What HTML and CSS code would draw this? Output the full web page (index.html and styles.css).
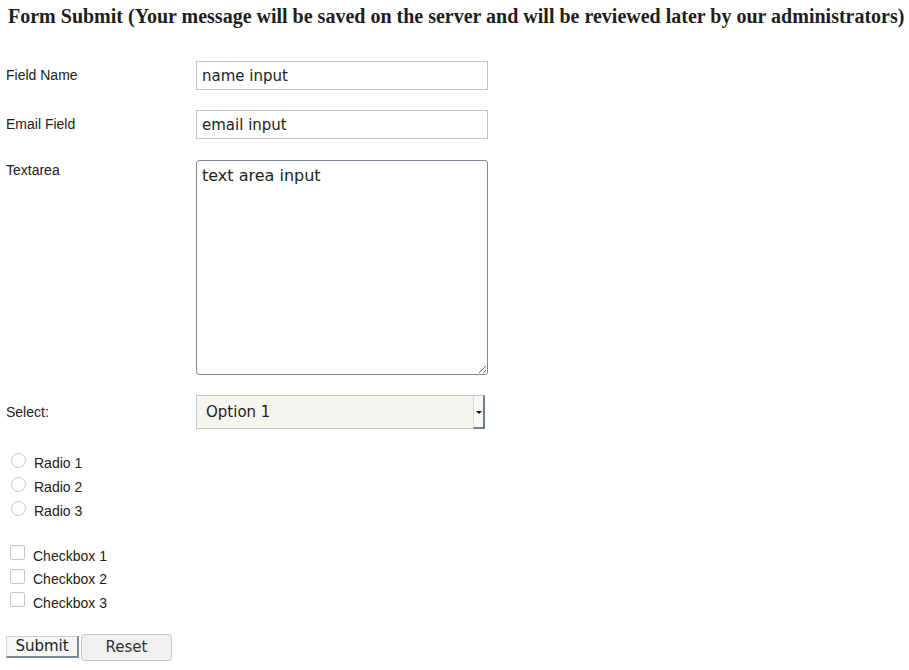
FILE: index.html
```html
<!DOCTYPE html>
<html>
<head>
<meta charset="utf-8">
<link rel="stylesheet" href="styles.css">
</head>
<body>
<h1 class="title">Form Submit (Your message will be saved on the server and will be reviewed later by our administrators)</h1>
<form class="form">
  <div class="row row-name">
    <label class="lbl lbl-input">Field Name</label>
    <input class="txt" type="text" value="name input">
  </div>
  <div class="row row-email">
    <label class="lbl lbl-input">Email Field</label>
    <input class="txt" type="text" value="email input">
  </div>
  <div class="row row-area">
    <label class="lbl lbl-area">Textarea</label>
    <textarea class="area">text area input</textarea>
  </div>
  <div class="row row-select">
    <label class="lbl lbl-select">Select:</label>
    <div class="select-wrap">
      <select class="sel"><option>Option 1</option><option>Option 2</option></select>
      <span class="sel-btn"><span class="sel-arrow"></span></span>
    </div>
  </div>
  <div class="group radios">
    <label class="choice"><input class="radio" type="radio" name="r"><span>Radio 1</span></label>
    <label class="choice"><input class="radio" type="radio" name="r"><span>Radio 2</span></label>
    <label class="choice"><input class="radio" type="radio" name="r"><span>Radio 3</span></label>
  </div>
  <div class="group checks">
    <label class="choice"><input class="check" type="checkbox"><span>Checkbox 1</span></label>
    <label class="choice"><input class="check" type="checkbox"><span>Checkbox 2</span></label>
    <label class="choice"><input class="check" type="checkbox"><span>Checkbox 3</span></label>
  </div>
  <div class="buttons">
    <button class="btn-submit" type="button">Submit</button>
    <button class="btn-reset" type="button">Reset</button>
  </div>
</form>
</body>
</html>
```
FILE: styles.css
```css
html, body {
  margin: 0;
  padding: 0;
  background: #ffffff;
}
body {
  color: #222222;
  font-family: "Liberation Sans", Arial, sans-serif;
  font-size: 14px;
}
.title {
  margin: 5px 0 0 8px;
  font-family: "Liberation Serif", "Times New Roman", serif;
  font-size: 20px;
  line-height: 23px;
  font-weight: bold;
  color: #1e1e1e;
  white-space: nowrap;
}
.form {
  display: flex;
  flex-direction: column;
  padding: 33px 0 0 6px;
}
.row {
  display: flex;
  align-items: flex-start;
  margin-bottom: 20px;
}
.row-area { margin-bottom: 20px; }
.row-email { margin-bottom: 21px; }
.lbl {
  width: 190px;
  flex: none;
  line-height: 16px;
}
.lbl-input { margin-top: 6px; }
.lbl-area { margin-top: 2px; }
.lbl-select { margin-top: 9px; }
.txt {
  box-sizing: border-box;
  width: 292px;
  height: 29px;
  margin: 0;
  padding: 0 5px;
  border: 1px solid #c4c4c4;
  border-radius: 0;
  background: #ffffff;
  font-family: "DejaVu Sans", sans-serif;
  font-size: 15px;
  color: #222222;
  outline: none;
}
.area {
  box-sizing: border-box;
  width: 292px;
  height: 215px;
  margin: 0;
  padding: 5px 5px;
  border: 1px solid #7d8ba0;
  border-radius: 3px;
  font-family: "DejaVu Sans", sans-serif;
  font-size: 16px;
  line-height: 19px;
  color: #222222;
  outline: none;
  resize: both;
  caret-color: #000;
}
.select-wrap {
  position: relative;
  width: 289px;
  height: 34px;
}
.sel {
  -webkit-appearance: none;
  appearance: none;
  box-sizing: border-box;
  width: 289px;
  height: 34px;
  margin: 0;
  padding: 0 0 0 9px;
  border: 1px solid #c8c8c8;
  border-radius: 0;
  background: #f6f6f1;
  font-family: "DejaVu Sans", sans-serif;
  font-size: 15px;
  color: #222222;
  outline: none;
}
.sel-btn {
  position: absolute;
  top: 0;
  right: 0;
  box-sizing: border-box;
  width: 12px;
  height: 34px;
  border-left: 1px solid #d6d6d2;
  border-top: 1px solid #c8c8c8;
  border-right: 2px solid #6e7c92;
  border-bottom: 2px solid #6e7c92;
  background: #f8f8f6;
  pointer-events: none;
  display: flex;
  align-items: center;
  justify-content: center;
}
.sel-arrow {
  width: 0;
  height: 0;
  margin-top: 1px;
  border-left: 3px solid transparent;
  border-right: 3px solid transparent;
  border-top: 3px solid #111111;
}
.group {
  display: flex;
  flex-direction: column;
}
.radios { padding-top: 2px; margin-bottom: 21px; }
.checks { margin-bottom: 19px; }
.choice {
  display: flex;
  align-items: center;
  height: 24px;
  line-height: 16px;
}
.radio {
  -webkit-appearance: none;
  appearance: none;
  box-sizing: border-box;
  width: 15px;
  height: 15px;
  margin: -6px 8px 0 5px;
  border: 1px solid #c6c6c6;
  border-radius: 50%;
  background: #ffffff;
}
.check {
  -webkit-appearance: none;
  appearance: none;
  box-sizing: border-box;
  width: 15px;
  height: 15px;
  margin: -6px 8px 0 4px;
  border: 1px solid #c6c6c6;
  border-radius: 2px;
  background: #ffffff;
}
.checks .choice { height: 23.5px; }
.buttons {
  display: flex;
  align-items: center;
  gap: 2px;
}
.btn-submit {
  box-sizing: border-box;
  width: 73px;
  height: 22px;
  margin: 0;
  padding: 0;
  border-top: 1px solid #d0d0d0;
  border-left: 1px solid #d0d0d0;
  border-right: 2px solid #7a8699;
  border-bottom: 2px solid #7a8699;
  border-radius: 0;
  background: #f6f6f4;
  font-family: "DejaVu Sans", sans-serif;
  font-size: 15px;
  line-height: 19px;
  color: #222222;
}
.btn-reset {
  box-sizing: border-box;
  width: 91px;
  height: 27px;
  margin: 0;
  padding: 0;
  border: 1px solid #c6c6c6;
  border-radius: 4px;
  background: #f1f1f0;
  font-family: "DejaVu Sans", sans-serif;
  font-size: 15px;
  line-height: 24px;
  color: #333333;
}
```
